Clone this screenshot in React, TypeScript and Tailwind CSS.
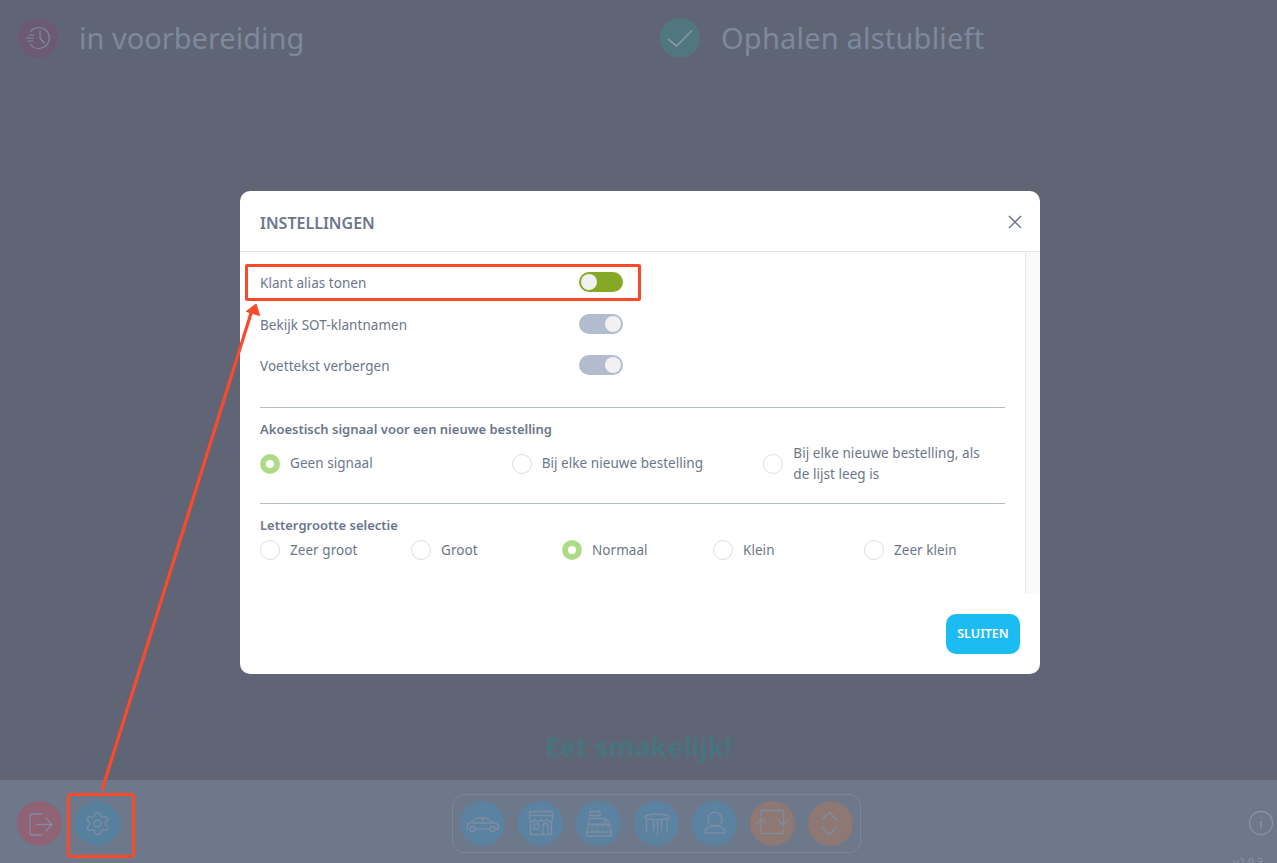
import type { ReactNode } from "react";
import { Settings } from "lucide-react";

const font = { fontFamily: '"Noto Sans", sans-serif' };

function Toggle({ on }: { on?: boolean }) {
  return (
    <div className={on ? "flex h-5 w-11 items-center justify-start rounded-full bg-[#86a827] px-[2px]" : "flex h-5 w-11 items-center justify-end rounded-full bg-[#b3bccf] px-[2px]"}>
      <div className="h-4 w-4 rounded-full bg-[#f1f1f1]" />
    </div>
  );
}

function SwitchRow({ label, on }: { label: string; on?: boolean }) {
  return (
    <div className="flex h-[41.5px] items-center">
      <span className="w-[319px] pt-[2px] text-[13.5px] tracking-[0.05px] text-[#6c768b]">{label}</span>
      <Toggle on={on} />
    </div>
  );
}

function Radio({ label, on }: { label: string; on?: boolean }) {
  return (
    <div className="flex items-center gap-[10px]">
      {on ? (
        <div className="flex h-5 w-5 shrink-0 items-center justify-center rounded-full bg-[#aedb88]">
          <div className="h-2 w-2 rounded-full bg-white" />
        </div>
      ) : (
        <div className="h-5 w-5 shrink-0 rounded-full border border-[#d8dfe8] bg-white" />
      )}
      <span className="text-[13.5px] leading-[21px] tracking-[0.05px] text-[#6c768b]">{label}</span>
    </div>
  );
}

function Round({ color, children }: { color: string; children: ReactNode }) {
  return (
    <div className={`flex h-[45px] w-[45px] shrink-0 items-center justify-center rounded-full ${color}`}>
      {children}
    </div>
  );
}

function Icon({ size = 34, children }: { size?: number; children: ReactNode }) {
  return (
    <svg width={size} height={size} viewBox="0 0 34 34" fill="none" stroke="#7f8ca1" strokeWidth="1.3" strokeLinecap="round" strokeLinejoin="round">
      {children}
    </svg>
  );
}

export default function App() {
  return (
    <div style={font} className="relative flex h-[863px] w-[1277px] flex-col overflow-hidden bg-[#5f6575]">
      {/* status columns */}
      <div className="flex h-[78px] shrink-0 pl-[18px] pt-[18px]">
        <div className="flex w-[642px] items-start gap-[21px]">
          <div className="flex h-10 w-10 items-center justify-center rounded-full bg-[#6b5a72]">
            <svg width="30" height="30" viewBox="0 0 30 30" fill="none" stroke="#7f8ca1" strokeWidth="1.2" strokeLinecap="round">
              <path d="M7.500 8.500a10.500 10.500 0 1 1 0 13" />
              <path d="M17 7.500v8l4.500 4.500M6 12h5M3 15h7M5 18h5" />
            </svg>
          </div>
          <span className="text-[29px] leading-10 text-[#7d899c]">in voorbereiding</span>
        </div>
        <div className="flex items-start gap-[21px]">
          <div className="flex h-10 w-10 items-center justify-center rounded-full bg-[#50767f]">
            <svg width="26" height="26" viewBox="0 0 26 26" fill="none" stroke="#8b97a8" strokeWidth="1.6" strokeLinecap="round" strokeLinejoin="round">
              <path d="M1.300 14.300l8.400 6.700L24.700 5.700" />
            </svg>
          </div>
          <span className="text-[29px] leading-10 tracking-[0.2px] text-[#7d899c]">Ophalen alstublieft</span>
        </div>
      </div>

      <div className="flex flex-1 items-end justify-center pb-[13px]">
        <span className="text-[27px] font-bold leading-10 text-[#477480]">Eet smakelijk!</span>
      </div>

      {/* bottom bar */}
      <div className="relative flex h-[83px] shrink-0 items-start bg-[#6d788b] pl-[17px] pt-[14px]">
        <div className="flex w-[435px] gap-[13px] pt-[7px]">
          <Round color="bg-[#8f6274]">
            <Icon>
              <path d="M19 7H9a2 2 0 0 0-2 2v17a2 2 0 0 0 2 2h10" />
              <path d="M13 17.500h16M23 11l6 6.500-6 6.500" />
            </Icon>
          </Round>
          <Round color="bg-[#56809d]">
            <Settings size={27} strokeWidth={1.1} color="#7f8ca1" />
          </Round>
        </div>
        <div className="flex h-[59px] items-center gap-[13px] rounded-[12px] border border-[#7b8699] px-[7px]">
          <Round color="bg-[#5b83a1]">
            <Icon>
              <path d="M1.500 22v-3c0-2 1-3 3-3.500l6-4.500h10l6 4.500c3 .5 6 1.500 6 3.500v3h-3" />
              <path d="M9 22h15M7 16h20M17 11v5" />
              <circle cx="6.500" cy="22" r="2.500" />
              <circle cx="26.500" cy="22" r="2.500" />
            </Icon>
          </Round>
          <Round color="bg-[#5b83a1]">
            <Icon>
              <path d="M6.500 14v13.500h21V14M5.500 4.500h23V12a2.900 2.900 0 0 1-5.750 0 2.900 2.900 0 0 1-5.750 0 2.900 2.900 0 0 1-5.750 0 2.900 2.900 0 0 1-5.750 0zM5.500 8.500h23" />
              <path d="M10 17h5v5h-5zM19 27.500V19a2.500 2.500 0 0 1 5 0v8.500" />
            </Icon>
          </Round>
          <Round color="bg-[#5b83a1]">
            <Icon>
              <path d="M8 4.500h10v4H8zM13 8.500v3M7 11.500h16v6H7zM23 13.500h3l2 4" />
              <path d="M7 17.500l-2.500 7.500v4h25v-4l-2-7.500zM4.500 25h25M10 20h1M15 20h1M20 20h1M25 20h1M10 23h1M15 23h1M20 23h1" />
            </Icon>
          </Round>
          <Round color="bg-[#5b83a1]">
            <Icon>
              <ellipse cx="17" cy="10" rx="12.500" ry="2.800" />
              <path d="M6.500 12v13M13.500 13v10M17.500 13v14.500M21.500 13v10M27 12v13" />
            </Icon>
          </Round>
          <Round color="bg-[#5b83a1]">
            <Icon>
              <circle cx="17" cy="12.200" r="7" />
              <path d="M7.500 26v-1c0-4 4-6 9.500-6s9.500 2 9.500 6v1z" />
            </Icon>
          </Round>
          <Round color="bg-[#8d7873]">
            <Icon>
              <path d="M5 9V3.500h22.500V18M0.500 16.500L5 12l5 4.500M5 12v14.500h22.500V22M22.500 13l5 5 5-5" />
            </Icon>
          </Round>
          <Round color="bg-[#8d7873]">
            <Icon>
              <path d="M8 12.500l7.300-7 7.300 7M8 20l7.300 7.500 7.300-7.500" />
            </Icon>
          </Round>
        </div>
        <svg className="absolute left-[1248px] top-[30px]" width="26" height="26" viewBox="0 0 26 26" fill="none" stroke="#8793a6" strokeWidth="1.3" strokeLinecap="round">
          <circle cx="13" cy="13" r="11.500" />
          <path d="M13 11.500v7M13 7.500v.5" />
        </svg>
        <span className="absolute left-[1233px] top-[74px] text-[11px] leading-4 text-[#8793a6]">v2.9.3</span>
      </div>

      {/* settings dialog */}
      <div className="absolute left-[240px] top-[191px] w-[800px] overflow-hidden rounded-[10px] bg-white">
        <div className="flex h-[61px] items-center justify-between border-b border-[#dfe5ec] pl-5 pr-[17px]">
          <h2 className="pt-[4px] text-[16px] font-semibold text-[#6c768b]">INSTELLINGEN</h2>
          <svg className="mt-[2px]" width="16" height="16" viewBox="0 0 16 16" fill="none" stroke="#6c768b" strokeWidth="1.5">
            <path d="M2 2l12 12M14 2L2 14" />
          </svg>
        </div>
        <div className="flex h-[342px]">
          <div className="w-[785px] pl-5 pr-5 pt-[9.5px]">
            <SwitchRow label="Klant alias tonen" on />
            <SwitchRow label="Bekijk SOT-klantnamen" />
            <SwitchRow label="Voettekst verbergen" />
            <div className="mt-[20.500px] border-t border-[#b3bccb] pt-[11px]">
              <h3 className="text-[13px] font-semibold leading-5 text-[#6c768b]">Akoestisch signaal voor een nieuwe bestelling</h3>
              <div className="grid h-[50px] w-[755px] grid-cols-3 items-center">
                <Radio label="Geen signaal" on />
                <Radio label="Bij elke nieuwe bestelling" />
                <div className="w-[232px]">
                  <Radio label="Bij elke nieuwe bestelling, als de lijst leeg is" />
                </div>
              </div>
            </div>
            <div className="mt-[14px] border-t border-[#b3bccb] pt-[11px]">
              <h3 className="text-[13px] font-semibold leading-5 text-[#6c768b]">Lettergrootte selectie</h3>
              <div className="mt-[5px] grid w-[755px] grid-cols-5">
                <Radio label="Zeer groot" />
                <Radio label="Groot" />
                <Radio label="Normaal" on />
                <Radio label="Klein" />
                <Radio label="Zeer klein" />
              </div>
            </div>
          </div>
          <div className="w-[15px] border-l border-[#e8e8e8] bg-[#fafafa]" />
        </div>
        <div className="flex h-20 items-center justify-end pr-5">
          <button className="h-10 w-[74px] rounded-[10px] bg-[#1abcf3] text-[12.500px] font-semibold text-white">SLUITEN</button>
        </div>
      </div>

      {/* annotations */}
      <div className="absolute left-[245px] top-[264px] h-[37px] w-[396px] rounded-[2px] border-[3px] border-[#fb4a2b]" />
      <div className="absolute left-[67px] top-[793px] h-[65px] w-[68px] rounded-[4px] border-[3px] border-[#fb4a2b]" />
      <svg className="pointer-events-none absolute left-0 top-0" width="1277" height="863" fill="none" stroke="#fb4a2b" strokeWidth="3.2">
        <path d="M102 790L252 310" />
        <path d="M256 304L246.300 311.400L259.700 315.600Z" strokeWidth="1" fill="#fb4a2b" />
      </svg>
    </div>
  );
}
